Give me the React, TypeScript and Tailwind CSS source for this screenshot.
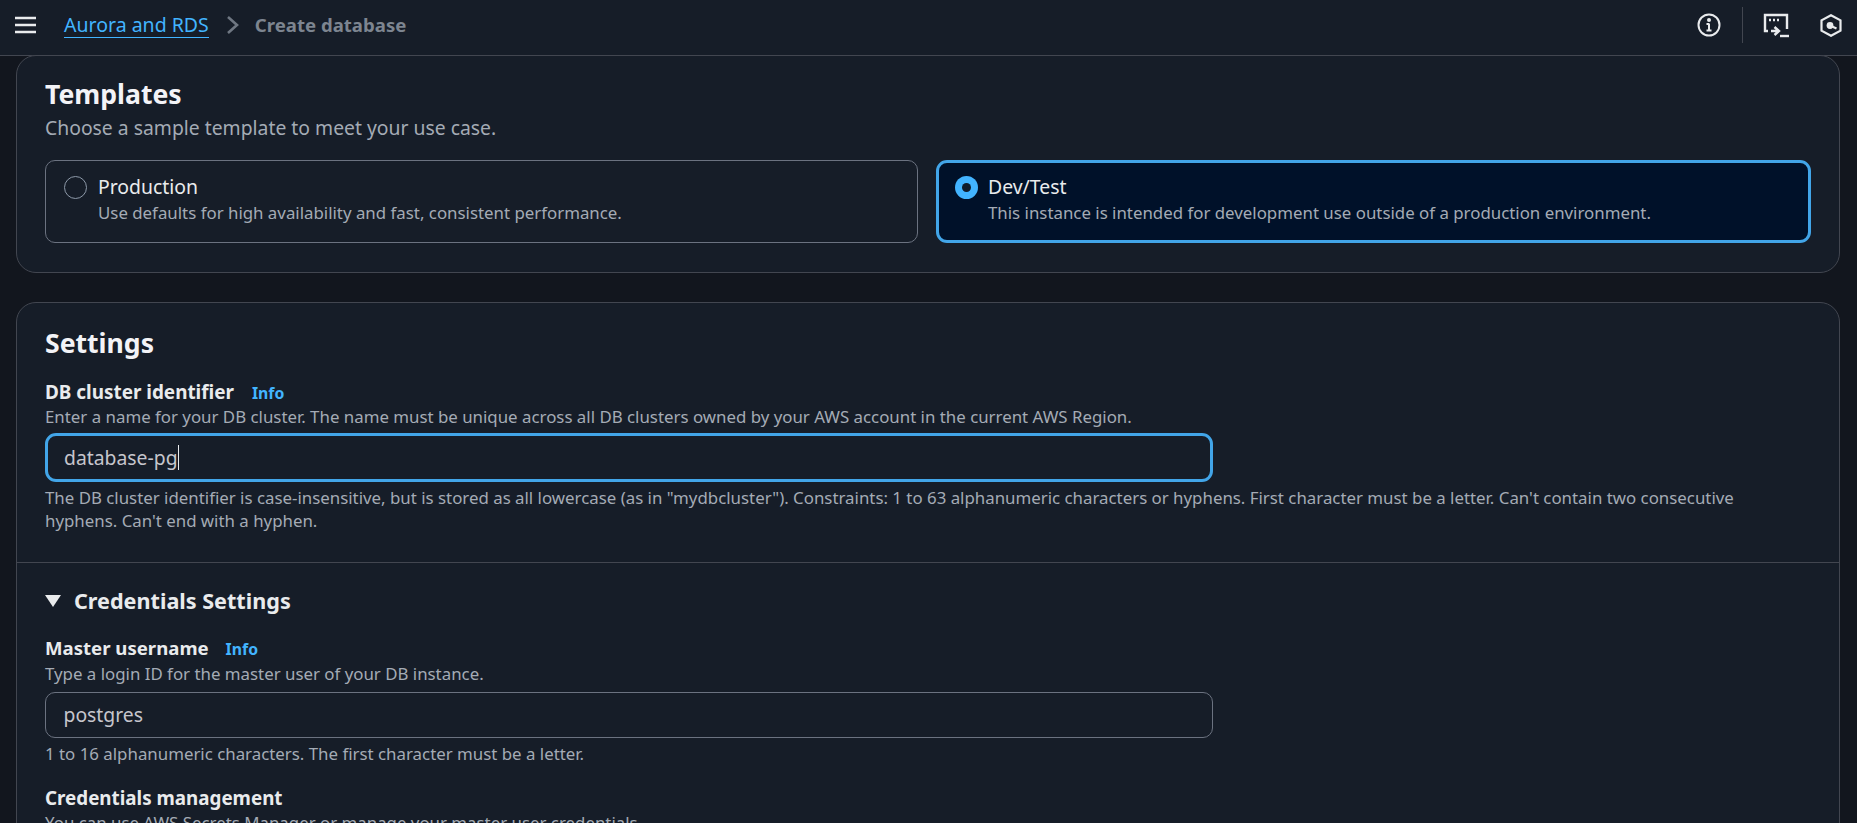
const fontStack = { fontFamily: '"Noto Sans", sans-serif' };

const InfoLink = () => (
  <span className="text-[15.8px] font-bold text-[#42b4ff] leading-[22px]">Info</span>
);

const RadioTile = ({
  label,
  description,
  selected,
}: {
  label: string;
  description: string;
  selected?: boolean;
}) => (
  <div
    className={
      selected
        ? 'flex-1 h-[83px] rounded-[11px] border-[3px] border-[#42a5e8] bg-[#001129] pl-[15.5px] pt-[10px] flex gap-[10.5px]'
        : 'flex-1 h-[83px] rounded-[10px] border border-[#6b7280] pl-[17.5px] pt-[12px] flex gap-[11.5px]'
    }
  >
    {selected ? (
      <div className="mt-[3px] w-[23px] h-[23px] rounded-full bg-[#42b4ff] flex items-center justify-center shrink-0">
        <div className="w-[9px] h-[9px] rounded-full bg-[#0f1b2a]" />
      </div>
    ) : (
      <div className="mt-[3px] w-[23px] h-[23px] rounded-full border border-[#8d99a8] shrink-0" />
    )}
    <div>
      <div className="text-[19.4px] leading-[28px] text-[#e9ebed]">{label}</div>
      <div className="text-[16.85px] leading-[24px] text-[#a4abb5]">{description}</div>
    </div>
  </div>
);

export default function App() {
  return (
    <div style={fontStack} className="h-screen overflow-hidden bg-[#12161e] flex flex-col">
      <header className="h-[56px] shrink-0 bg-[#161d28] border-b border-[#424650] flex items-center pb-[5px]">
        <svg width="22" height="18" viewBox="0 0 22 18" className="ml-[15px]" fill="none" stroke="#e9ebed" strokeWidth="2.6">
          <path d="M0 2h21M0 9h21M0 16h21" />
        </svg>
        <a className="ml-[27px] text-[19.5px] leading-[24px] text-[#42b4ff] border-b border-[#42b4ff]">Aurora and RDS</a>
        <svg width="14" height="20" viewBox="0 0 14 20" className="ml-[17px]" fill="none" stroke="#6f7782" strokeWidth="2.6">
          <path d="M2 2l9 8-9 8" />
        </svg>
        <span className="ml-[15px] text-[18.6px] font-bold text-[#7d8590]">Create database</span>
        <div className="ml-auto flex items-center">
          <svg width="24" height="24" viewBox="0 0 24 24" fill="none" stroke="#e9ebed" strokeWidth="2">
            <circle cx="12" cy="12" r="10.5" />
            <path d="M12 10.5v7M9.5 11h2.5M9.5 17.5h5" />
            <circle cx="12" cy="7" r="1" fill="#e9ebed" />
          </svg>
          <div className="ml-[21px] h-[36px] w-px bg-[#424650]" />
          <svg width="26" height="26" viewBox="0 0 26 26" className="ml-[20px]" fill="none" stroke="#e9ebed" strokeWidth="2.4">
            <path d="M5 19H2V3h22v14" />
            <path d="M6 8h2M10 8h2M14 8h2" />
            <path d="M8 19h8M11.5 15l4.5 4-4.5 4" />
            <path d="M17 24h9" />
          </svg>
          <svg width="22" height="23" viewBox="0 0 22 23" className="ml-[31px] mr-[15px]" fill="none" stroke="#e9ebed" strokeWidth="2.2">
            <path d="M11 1.2l9.5 5.2v10.2l-9.5 5.2-9.5-5.2V6.4z" />
            <circle cx="10" cy="11.5" r="3.4" fill="#e9ebed" stroke="none" />
            <path d="M11 12l5.5 2.5" />
          </svg>
        </div>
      </header>

      <main className="pl-[16px] pr-[17px] flex flex-col gap-[29px] -mt-px">
        <section className="bg-[#161d28] border border-[#424650] rounded-[20px] pl-[28px] pr-[28px] pt-[20px] pb-[29px]">
          <h2 className="text-[26.6px] leading-[37px] font-bold text-[#f3f3f7]">Templates</h2>
          <p className="text-[19.35px] leading-[28px] text-[#a4abb5] mt-[1px]">Choose a sample template to meet your use case.</p>
          <div className="mt-[18px] flex gap-[18px]">
            <RadioTile label="Production" description="Use defaults for high availability and fast, consistent performance." />
            <RadioTile selected label="Dev/Test" description="This instance is intended for development use outside of a production environment." />
          </div>
        </section>

        <section className="bg-[#161d28] border border-[#424650] rounded-[20px] min-h-[600px]">
          <div className="px-[28px] pt-[22px] pb-[30px] border-b border-[#424650]">
            <h2 className="text-[26.6px] leading-[36px] font-bold text-[#f3f3f7]">Settings</h2>
            <div className="mt-[18px] flex items-baseline gap-[18px]">
              <span className="text-[18.9px] leading-[26px] font-bold text-[#e9ebed]">DB cluster identifier</span>
              <InfoLink />
            </div>
            <p className="text-[16.85px] leading-[24px] text-[#a4abb5]">
              Enter a name for your DB cluster. The name must be unique across all DB clusters owned by your AWS account in the current AWS Region.
            </p>
            <div className="mt-[4px] w-[1168px] h-[49px] rounded-[11px] border-[3px] border-[#42a5e8] flex items-center pl-[16px]">
              <span className="text-[19.35px] text-[#c6c6cd]">database-pg</span>
              <span className="w-px h-[25px] bg-[#e9ebed]" />
            </div>
            <p className="mt-[4px] max-w-[1745px] text-[16.85px] leading-[23px] text-[#a4abb5]">
              The DB cluster identifier is case-insensitive, but is stored as all lowercase (as in "mydbcluster"). Constraints: 1 to 63 alphanumeric characters or hyphens. First character must be a letter. Can't contain two consecutive hyphens. Can't end with a hyphen.
            </p>
          </div>

          <div className="px-[28px] pt-[22px]">
            <div className="flex items-center gap-[13px]">
              <svg width="16" height="12" viewBox="0 0 16 12" fill="#e9ebed">
                <path d="M0 0h16L8 12z" />
              </svg>
              <span className="text-[21.6px] leading-[32px] font-bold text-[#e9ebed]">Credentials Settings</span>
            </div>
            <div className="mt-[17px] flex items-baseline gap-[17px]">
              <span className="text-[18.6px] leading-[28px] font-bold text-[#e9ebed]">Master username</span>
              <InfoLink />
            </div>
            <p className="text-[16.85px] leading-[24px] text-[#a4abb5]">Type a login ID for the master user of your DB instance.</p>
            <div className="mt-[6px] w-[1168px] h-[46px] rounded-[10px] border border-[#6b7280] flex items-center pl-[17.5px]">
              <span className="text-[19.35px] text-[#c6c6cd]">postgres</span>
            </div>
            <p className="mt-[4px] text-[16.85px] leading-[24px] text-[#a4abb5]">1 to 16 alphanumeric characters. The first character must be a letter.</p>
            <div className="mt-[19px] text-[18.8px] leading-[26px] font-bold text-[#e9ebed]">Credentials management</div>
            <p className="text-[16.85px] leading-[24px] text-[#a4abb5]">You can use AWS Secrets Manager or manage your master user credentials.</p>
          </div>
        </section>
      </main>
    </div>
  );
}
